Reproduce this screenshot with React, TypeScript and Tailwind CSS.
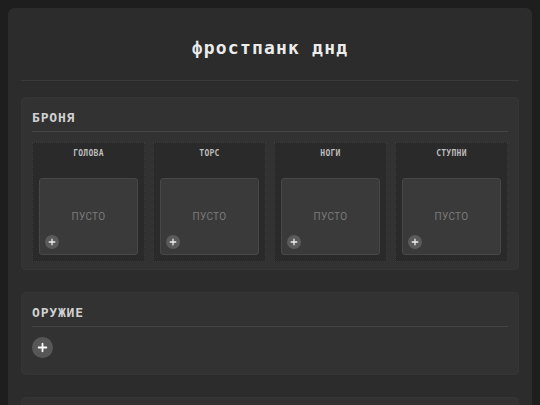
import React from 'react';

const mono = { fontFamily: '"DejaVu Sans Mono", "Liberation Mono", monospace' };
const sans = { fontFamily: 'Roboto, "Noto Sans", sans-serif' };

const SLOTS = ['ГОЛОВА', 'ТОРС', 'НОГИ', 'СТУПНИ'];

const PlusIcon: React.FC<{ size: number }> = ({ size }) => (
  <svg width={size} height={size} viewBox="0 0 10 10" fill="none" stroke="currentColor" strokeWidth="1.6" strokeLinecap="round">
    <path d="M5 1.5v7M1.5 5h7" />
  </svg>
);

const SectionHeader: React.FC<{ title: string }> = ({ title }) => (
  <div className="pb-[5px] border-b border-[#444444]">
    <h2 className="text-[13px] leading-[16px] font-bold tracking-[0.8px] text-[#d0d0d0]" style={mono}>{title}</h2>
  </div>
);

const ArmorSlot: React.FC<{ label: string }> = ({ label }) => (
  <div className="bg-[#2a2a2a] border border-dotted border-[#3c3c3c] p-[6px] flex flex-col">
    <div className="h-[10px] flex items-center justify-center text-[8px] font-bold tracking-[0.3px] text-[#bdbdbd]" style={mono}>{label}</div>
    <div className="relative mt-[19px] h-[77px] bg-[#3a3a3a] border border-[#474747] rounded-[3px] flex items-center justify-center">
      <span className="text-[10px] text-[#7a7a7a] tracking-[0.3px]" style={sans}>ПУСТО</span>
      <button className="absolute left-[5px] bottom-[5px] w-[14px] h-[14px] rounded-full bg-[#5a5a5a] text-[#eeeeee] flex items-center justify-center">
        <PlusIcon size={8} />
      </button>
    </div>
  </div>
);

export default function App() {
  return (
    <div className="min-h-[405px] bg-[#1e1e1e] p-[8px] pb-0 overflow-hidden">
      <div className="bg-[#2c2c2c] rounded-[6px] px-[13px] min-h-[420px]">
        {/* Header */}
        <div className="pt-[28px] pb-[20px] border-b border-[#3a3a3a]">
          <h1 className="text-center text-[18px] leading-[24px] font-bold tracking-[1.2px] text-[#ececec]" style={mono}>фростпанк днд</h1>
        </div>

        <div className="pt-[16px] flex flex-col gap-[22px]">
          {/* Armor */}
          <section className="bg-[#323232] border border-[#353535] rounded-[4px] px-[10px] pt-[12px] pb-[7px]">
            <SectionHeader title="БРОНЯ" />
            <div className="mt-[10px] grid grid-cols-4 gap-[8px]">
              {SLOTS.map(s => <ArmorSlot key={s} label={s} />)}
            </div>
          </section>

          {/* Weapons */}
          <section className="bg-[#323232] border border-[#353535] rounded-[4px] px-[10px] pt-[12px] pb-[16px]">
            <SectionHeader title="ОРУЖИЕ" />
            <button className="mt-[10px] w-[21px] h-[21px] rounded-full bg-[#575757] text-white flex items-center justify-center">
              <PlusIcon size={11} />
            </button>
          </section>

          <section className="bg-[#323232] border border-[#353535] rounded-[4px] h-[40px]" />
        </div>
      </div>
    </div>
  );
}
